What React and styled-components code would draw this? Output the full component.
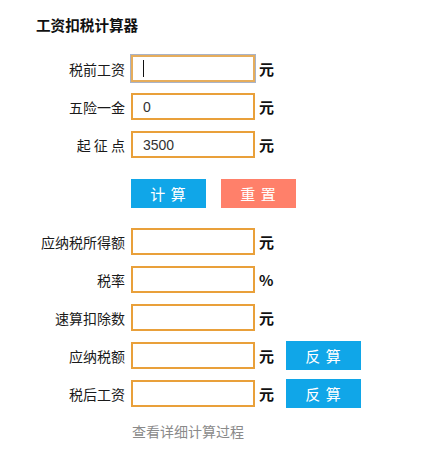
import { useState } from "react";
import styled, { createGlobalStyle } from "styled-components";

const GlobalStyle = createGlobalStyle`
  html, body {
    margin: 0;
    padding: 0;
    background: #fff;
  }
  body {
    font-family: "Liberation Sans", "Noto Sans CJK SC", sans-serif;
    color: #222;
  }
`;

const fields = [
  { key: "income", label: "税前工资", unit: "元" },
  { key: "insurance", label: "五险一金", unit: "元", init: "0" },
  { key: "threshold", label: "起 征 点", unit: "元", init: "3500" },
];

const results = [
  { key: "taxable", label: "应纳税所得额", unit: "元" },
  { key: "rate", label: "税率", unit: "%" },
  { key: "deduct", label: "速算扣除数", unit: "元" },
  { key: "tax", label: "应纳税额", unit: "元", reverse: true },
  { key: "net", label: "税后工资", unit: "元", reverse: true },
];

const App = () => {
  const [values, setValues] = useState({ insurance: "0", threshold: "3500" });

  const update = (key) => (e) => {
    setValues({ ...values, [key]: e.target.value });
  };

  const reset = () => {
    setValues({ insurance: "0", threshold: "3500" });
  };

  return (
    <Page>
      <GlobalStyle />
      <Title>工资扣税计算器</Title>

      <Group>
        {fields.map((f, i) => (
          <Row key={f.key}>
            <Label>{f.label}</Label>
            <InputWrap>
              <Input
                $active={i === 0}
                value={values[f.key] || ""}
                onChange={update(f.key)}
              />
              {i === 0 && !values[f.key] && <Caret />}
            </InputWrap>
            <Unit>{f.unit}</Unit>
          </Row>
        ))}
      </Group>

      <Actions>
        <Button>计 算</Button>
        <Button $color="#ff806a" onClick={reset}>
          重 置
        </Button>
      </Actions>

      <Group>
        {results.map((r) => (
          <Row key={r.key}>
            <Label>{r.label}</Label>
            <InputWrap>
              <Input value={values[r.key] || ""} onChange={update(r.key)} />
            </InputWrap>
            <Unit>{r.unit}</Unit>
            {r.reverse && <Button>反 算</Button>}
          </Row>
        ))}
      </Group>

      <DetailLink>查看详细计算过程</DetailLink>
    </Page>
  );
};

const Page = styled.div`
  width: 429px;
  height: 457px;
  padding-top: 15px;
  box-sizing: border-box;
`;

const Title = styled.h1`
  margin: 0 0 20px 36px;
  font-family: "Noto Sans CJK SC", sans-serif;
  font-size: 14.6px;
  line-height: 20px;
  font-weight: bold;
  color: #111;
`;

const Group = styled.div`
  display: flex;
  flex-direction: column;
  gap: 11px;
`;

const Row = styled.div`
  display: flex;
  align-items: center;
  height: 27px;
`;

const Label = styled.span`
  width: 131px;
  padding-right: 6px;
  box-sizing: border-box;
  text-align: right;
  font-family: "Noto Sans CJK SC", sans-serif;
  font-size: 14px;
  color: #1a1a1a;
  white-space: pre;
`;

const InputWrap = styled.div`
  position: relative;
  display: flex;
`;

const Input = styled.input`
  width: 124px;
  height: 27px;
  box-sizing: border-box;
  border: 2px solid ${(p) => (p.$active ? "#e6ad5c" : "#e9a03a")};
  box-shadow: ${(p) => (p.$active ? "0 0 0 1px #a9b3c8" : "none")};
  padding: 0 10px;
  font-family: "Liberation Sans", sans-serif;
  font-size: 14px;
  color: #333;
  background: #fff;
  outline: none;
`;

const Caret = styled.span`
  position: absolute;
  left: 12px;
  top: 5px;
  width: 1px;
  height: 17px;
  background: #111;
  pointer-events: none;
`;

const Unit = styled.span`
  width: 27px;
  margin-left: 4px;
  font-family: "Noto Sans CJK SC", sans-serif;
  font-size: 15px;
  font-weight: bold;
  color: #111;
`;

const Actions = styled.div`
  display: flex;
  gap: 15px;
  margin: 21px 0 20px 131px;
`;

const Button = styled.button`
  width: 75px;
  height: 29px;
  border: none;
  padding: 0;
  background: ${(p) => p.$color || "#10a6e8"};
  color: #fff;
  font-family: "Noto Sans CJK SC", sans-serif;
  font-size: 15px;
  letter-spacing: 1px;
  cursor: pointer;
`;

const DetailLink = styled.a`
  display: block;
  margin: 14px 0 0 132px;
  font-family: "Noto Sans CJK SC", sans-serif;
  font-size: 14px;
  line-height: 20px;
  color: #8a8a8a;
  cursor: pointer;
`;

export default App;
